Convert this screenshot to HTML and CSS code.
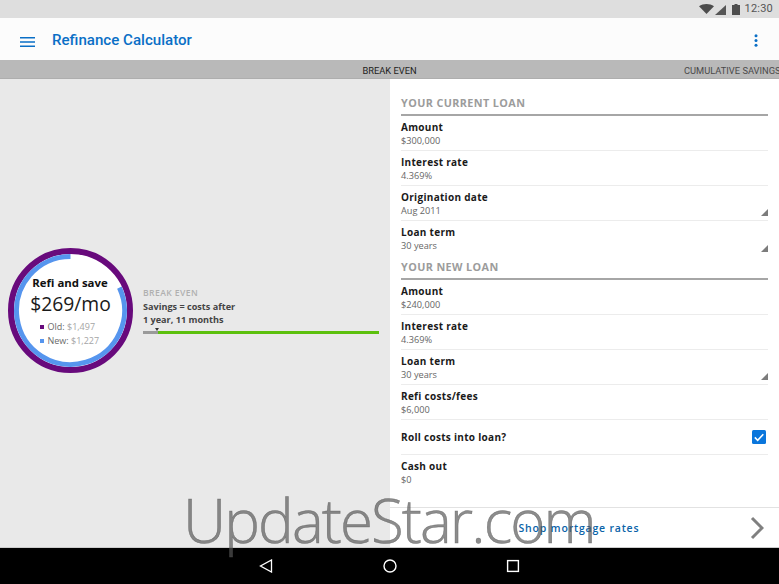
FILE: index.html
```html
<!DOCTYPE html>
<html lang="en">
<head>
<meta charset="utf-8">
<title>Refinance Calculator</title>
<link rel="stylesheet" href="styles.css">
</head>
<body>
<div class="app">
  <header class="status">
    <svg class="st-wifi" viewBox="0 0 14 11" preserveAspectRatio="none"><path d="M0 2.6C4-.8 10-.8 14 2.6L7 11z"/></svg>
    <svg class="st-signal" viewBox="0 0 10 10" preserveAspectRatio="none"><path d="M10 0V10H0z"/></svg>
    <svg class="st-batt" viewBox="0 0 7 11" preserveAspectRatio="none"><path d="M2.2 0h2.6v1H7v10H0V1h2.2z"/></svg>
    <span class="st-time">12:30</span>
  </header>
  <div class="toolbar">
    <svg class="menu" viewBox="0 0 15 10"><path d="M0 0h15v1.6H0zM0 4.2h15v1.6H0zM0 8.4h15V10H0z"/></svg>
    <h1 class="title">Refinance Calculator</h1>
    <svg class="more" viewBox="0 0 4 13"><circle cx="2" cy="1.7" r="1.5"/><circle cx="2" cy="6.5" r="1.5"/><circle cx="2" cy="11.3" r="1.5"/></svg>
  </div>
  <nav class="tabs">
    <span class="tab-main">BREAK EVEN</span>
    <span class="tab-next">CUMULATIVE SAVINGS</span>
  </nav>
  <main class="main">
    <section class="left">
      <div class="donut">
        <svg class="donut-ring" viewBox="0 0 125 125">
          <circle cx="62.5" cy="62.5" r="59.5" fill="#fff" stroke="#680a7c" stroke-width="6"/>
          <path d="M62.5 8.5A54 54 0 1 0 111.4 39.6" fill="none" stroke="#5695ee" stroke-width="5"/>
        </svg>
        <div class="donut-title">Refi and save</div>
        <div class="donut-amount">$269/mo</div>
        <div class="legend"><i class="dot dot-old"></i>Old: <span>$1,497</span></div>
        <div class="legend"><i class="dot dot-new"></i>New: <span>$1,227</span></div>
      </div>
      <div class="be">
        <div class="be-head">BREAK EVEN</div>
        <div class="be-text">Savings = costs after</div>
        <div class="be-text">1 year, 11 months</div>
        <div class="be-bar"><i class="be-spent"></i><i class="be-mark"></i></div>
      </div>
    </section>
    <section class="right">
      <div class="form">
        <h2 class="group first">YOUR CURRENT LOAN</h2>
        <div class="row"><b>Amount</b><span>$300,000</span></div>
        <div class="row"><b>Interest rate</b><span>4.369%</span></div>
        <div class="row pick"><b>Origination date</b><span>Aug 2011</span></div>
        <div class="row pick last"><b>Loan term</b><span>30 years</span></div>
        <h2 class="group">YOUR NEW LOAN</h2>
        <div class="row"><b>Amount</b><span>$240,000</span></div>
        <div class="row"><b>Interest rate</b><span>4.369%</span></div>
        <div class="row pick"><b>Loan term</b><span>30 years</span></div>
        <div class="row"><b>Refi costs/fees</b><span>$6,000</span></div>
        <div class="row check"><b>Roll costs into loan?</b>
          <svg class="box" viewBox="0 0 14 14"><rect width="14" height="14" rx="1.5" fill="#0a76dc"/><path d="M2.8 7.4l2.9 2.9 5.6-6" fill="none" stroke="#fff" stroke-width="1.6"/></svg>
        </div>
        <div class="row last"><b>Cash out</b><span>$0</span></div>
      </div>
      <div class="shop">
        <span>Shop mortgage rates</span>
        <svg class="chev" viewBox="0 0 14 24"><path d="M2 2l10 10L2 22" fill="none" stroke="#808080" stroke-width="3"/></svg>
      </div>
    </section>
  </main>
  <footer class="navbar">
    <svg class="nav-ic" viewBox="0 0 14 14"><path d="M12.5 1v12L1.5 7z" fill="none" stroke="#fff" stroke-width="1.3"/></svg>
    <svg class="nav-ic" viewBox="0 0 14 14"><circle cx="7" cy="7" r="6" fill="none" stroke="#fff" stroke-width="1.4"/></svg>
    <svg class="nav-ic" viewBox="0 0 14 14"><rect x="1.6" y="1.6" width="10.8" height="10.8" fill="none" stroke="#fff" stroke-width="1.4"/></svg>
  </footer>
  <div class="watermark">UpdateStar.com</div>
</div>
</body>
</html>
```
FILE: styles.css
```css
* { box-sizing: border-box; }
html, body { margin: 0; height: 100%; }
body { font-family: "Open Sans", "Liberation Sans", sans-serif; overflow: hidden; }
.app { position: relative; width: 779px; height: 584px; display: flex; flex-direction: column; overflow: hidden; background: #e9e9e9; }

.status { height: 18px; flex: none; background: #dedede; display: flex; align-items: center; justify-content: flex-end; padding-right: 6px; color: #555; }
.st-wifi { width: 15px; height: 10px; fill: #4d4d4d; margin-right: 1px; }
.st-signal { width: 11px; height: 10px; fill: #555; margin-right: 6px; margin-top: 1px; }
.st-batt { width: 8px; height: 11px; fill: #4d4d4d; margin-right: 5px; }
.st-time { font: 11px/18px Roboto, sans-serif; color: #555; letter-spacing: .2px; }

.toolbar { height: 42px; flex: none; background: #fcfcfc; display: flex; align-items: center; padding: 0 20px; color: #0a6fc6; }
.menu { width: 15px; height: 10px; fill: #0a6fc6; margin-top: 6px; }
.title { font: 500 15.1px/20px Roboto, sans-serif; margin: 2px 0 0 17px; flex: 1; }
.more { width: 4px; height: 13px; fill: #0a6fc6; margin: 3px 1px 0 0; }

.tabs { height: 19px; flex: none; background: #b9b9b9; border-bottom: 1px solid #aeaeae; position: relative; display: flex; justify-content: center; align-items: center; font: 9.3px/19px Roboto, sans-serif; color: #1e1e1e; }
.tab-main { padding: 2px 0 0 0; }
.tab-next { position: absolute; left: 684px; top: 1px; color: #4a4a4a; white-space: nowrap; }

.main { flex: 1; display: flex; min-height: 0; }
.left { width: 390px; flex: none; display: flex; align-items: center; padding: 0 11px 5px 8px; }
.donut { position: relative; width: 125px; height: 125px; flex: none; display: flex; flex-direction: column; align-items: center; padding-top: 28px; }
.donut-ring { position: absolute; left: 0; top: 0; width: 125px; height: 125px; }
.donut-title, .donut-amount, .legend { position: relative; }
.donut-title { font-size: 11.4px; line-height: 14px; font-weight: 700; color: #111; margin-left: -1px; }
.donut-amount { font-size: 19.3px; line-height: 26px; margin-top: 1px; color: #1a1a1a; }
.legend { width: 64px; font-size: 9px; line-height: 14px; color: #6a6a6a; white-space: nowrap; display: block; margin-left: 2px; }
.legend span { color: #a5a5a5; }
.donut-amount + .legend { margin-top: 3px; }
.dot { display: inline-block; width: 4px; height: 4px; margin-right: 4px; vertical-align: 1px; }
.dot-old { background: #680a7c; }
.dot-new { background: #5695ee; }

.be { flex: 1; margin-left: 10px; }
.be-head { font-size: 8.6px; line-height: 13px; font-weight: 600; letter-spacing: .4px; color: #b0b0b0; }
.be-text { font-size: 9.1px; line-height: 13px; font-weight: 700; color: #444; }
.be-bar { position: relative; height: 3px; background: #5cc00d; margin-top: 5px; }
.be-spent { position: absolute; left: 0; top: 0; width: 15px; height: 3px; background: #9a9a9a; }
.be-mark { position: absolute; left: 12px; top: -3px; border: 2.5px solid transparent; border-top: 3px solid #333; border-bottom: 0; }

.right { flex: 1; background: #fff; display: flex; flex-direction: column; min-width: 0; }
.form { flex: 1; padding: 0 11px; }
.group { margin: 0; height: 24px; font-size: 10.8px; line-height: 15px; font-weight: 700; letter-spacing: .4px; color: #9c9c9c; border-bottom: 2px solid #a6a6a6; padding-top: 3px; }
.group.first { height: 37px; padding-top: 16px; }
.row { position: relative; height: 35px; border-bottom: 1px solid #ececec; padding-top: 4px; }
.row.last { border-bottom: 0; }
.row b { display: block; font-size: 10px; line-height: 14px; font-weight: 700; letter-spacing: .3px; color: #1a1a1a; }
.row span { display: block; font-size: 9.2px; line-height: 14px; color: #666; }
.row.pick::after { content: ""; position: absolute; right: 0; bottom: 4px; border-style: solid; border-width: 0 0 7px 7px; border-color: transparent transparent #7c7c7c transparent; }
.row.check { display: flex; justify-content: space-between; align-items: center; padding: 0 2px 1px 0; }
.box { width: 14px; height: 14px; }

.shop { height: 40px; flex: none; border-top: 1px solid #e2e2e2; display: flex; align-items: center; padding: 1px 15px 0 128.5px; justify-content: space-between; font-size: 10.5px; font-weight: 600; letter-spacing: .8px; color: #0a63a8; }
.chev { width: 14px; height: 24px; }

.navbar { height: 37px; flex: none; background: #000; display: flex; align-items: center; padding-left: 259px; gap: 109.5px; border-top: 1px solid #ccc; }
.nav-ic { width: 14px; height: 14px; }

.watermark { position: absolute; left: 183px; top: 484px; font-size: 60px; line-height: 72px; font-weight: 300; letter-spacing: -1.9px; -webkit-text-stroke: .5px rgba(85, 85, 85, .68); color: rgba(85, 85, 85, .68); white-space: nowrap; pointer-events: none; }
```
